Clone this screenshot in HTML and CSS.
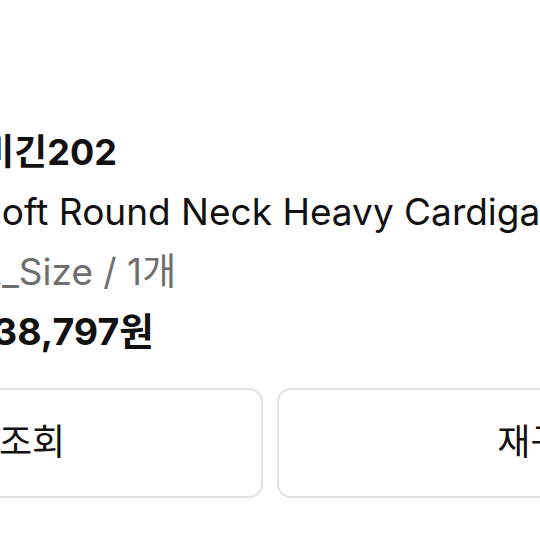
FILE: index.html
```html
<!DOCTYPE html>
<html lang="ko">
<head>
  <meta charset="UTF-8" />
  <meta name="viewport" content="width=device-width, initial-scale=1.0" />
  <title>주문 상품</title>
  <link rel="stylesheet" href="styles.css">
</head>
<body>
  <div class="screen">
    <div class="item">
      <div class="brand">비긴202</div>
      <div class="name">Soft Round Neck Heavy Cardigan</div>
      <div class="option">L_Size / 1개</div>
      <div class="price">38,797원</div>
    </div>

    <div class="actions">
      <button class="btn btn-track">배송조회</button>
      <button class="btn">재구매</button>
    </div>
  </div>
</body>
</html>
```

FILE: styles.css
```css
body {
  margin: 0;
  background: #fff;
  overflow: hidden;
  font-family: "Inter", "Noto Sans CJK KR", sans-serif;
  color: #111;
}
.screen {
  width: 1094px;
  margin-left: -277px;
  padding-top: 128px;
}
.item {
  padding-left: 255px;
}
.brand {
  font-size: 36px;
  font-weight: 700;
  line-height: 48px;
  margin-left: 3px;
}
.name {
  font-size: 37px;
  line-height: 48px;
  margin-top: 12px;
  white-space: nowrap;
}
.option {
  font-size: 37px;
  line-height: 48px;
  margin-top: 12px;
  margin-left: 3px;
  color: #6e6e6e;
}
.price {
  font-size: 37.5px;
  font-weight: 700;
  line-height: 48px;
  margin-top: 12px;
  margin-left: 15px;
}
.actions {
  display: flex;
  gap: 14px;
  margin-top: 32px;
}
.btn {
  flex: 1;
  height: 110px;
  padding: 0 0 8px;
  background: #fff;
  border: 2px solid #e2e2e2;
  border-radius: 14px;
  font-family: inherit;
  font-size: 36px;
  color: #111;
}
.btn-track {
  text-indent: 12px;
}
```
